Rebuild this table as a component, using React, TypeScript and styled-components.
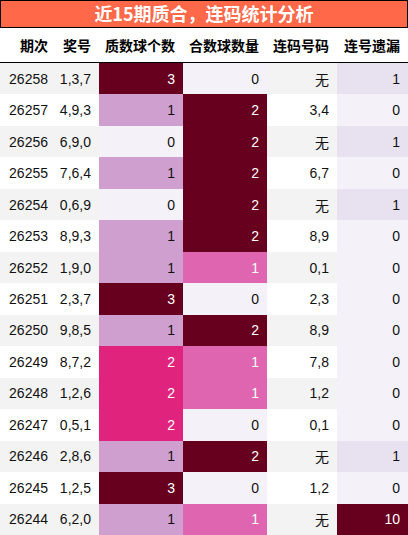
import styled, { createGlobalStyle } from "styled-components";

type Row = {
  issue: string;
  nums: string;
  prime: number;
  composite: number;
  pair: string;
  miss: number;
};

const rows: Row[] = [
  { issue: "26258", nums: "1,3,7", prime: 3, composite: 0, pair: "无", miss: 1 },
  { issue: "26257", nums: "4,9,3", prime: 1, composite: 2, pair: "3,4", miss: 0 },
  { issue: "26256", nums: "6,9,0", prime: 0, composite: 2, pair: "无", miss: 1 },
  { issue: "26255", nums: "7,6,4", prime: 1, composite: 2, pair: "6,7", miss: 0 },
  { issue: "26254", nums: "0,6,9", prime: 0, composite: 2, pair: "无", miss: 1 },
  { issue: "26253", nums: "8,9,3", prime: 1, composite: 2, pair: "8,9", miss: 0 },
  { issue: "26252", nums: "1,9,0", prime: 1, composite: 1, pair: "0,1", miss: 0 },
  { issue: "26251", nums: "2,3,7", prime: 3, composite: 0, pair: "2,3", miss: 0 },
  { issue: "26250", nums: "9,8,5", prime: 1, composite: 2, pair: "8,9", miss: 0 },
  { issue: "26249", nums: "8,7,2", prime: 2, composite: 1, pair: "7,8", miss: 0 },
  { issue: "26248", nums: "1,2,6", prime: 2, composite: 1, pair: "1,2", miss: 0 },
  { issue: "26247", nums: "0,5,1", prime: 2, composite: 0, pair: "0,1", miss: 0 },
  { issue: "26246", nums: "2,8,6", prime: 1, composite: 2, pair: "无", miss: 1 },
  { issue: "26245", nums: "1,2,5", prime: 3, composite: 0, pair: "1,2", miss: 0 },
  { issue: "26244", nums: "6,2,0", prime: 1, composite: 1, pair: "无", miss: 10 },
];

// 색 단계 (PuRd 비슷하게)
const primeColor = (v: number) =>
  v >= 3 ? "#67001f" : v === 2 ? "#e0237c" : v === 1 ? "#cfa0cf" : "#f4f2f8";
const compositeColor = (v: number) =>
  v >= 2 ? "#67001f" : v === 1 ? "#df65b0" : "#f4f2f8";
const missColor = (v: number) =>
  v >= 10 ? "#67001f" : v >= 1 ? "#e8e2f0" : "#f4f2f8";

const isDark = (bg: string) => bg === "#67001f" || bg === "#e0237c" || bg === "#df65b0";

const App = () => {
  return (
    <>
      <GlobalStyle />
      <Wrap>
        <Title>近15期质合，连码统计分析</Title>
        <Table>
          <HeadRow>
            <HeadCell>期次</HeadCell>
            <HeadCell>奖号</HeadCell>
            <HeadCell>质数球个数</HeadCell>
            <HeadCell>合数球数量</HeadCell>
            <HeadCell>连码号码</HeadCell>
            <HeadCell>连号遗漏</HeadCell>
          </HeadRow>
          {rows.map((row, index) => {
            const stripe = index % 2 === 0 ? "#f3f3f3" : "#ffffff";
            const p = primeColor(row.prime);
            const c = compositeColor(row.composite);
            const m = missColor(row.miss);
            return (
              <BodyRow key={row.issue}>
                <Cell $bg={stripe}>{row.issue}</Cell>
                <Cell $bg={stripe}>{row.nums}</Cell>
                <Cell $bg={p} $light={isDark(p)}>{row.prime}</Cell>
                <Cell $bg={c} $light={isDark(c)}>{row.composite}</Cell>
                <Cell $bg={stripe} $cjk={row.pair === "无"}>{row.pair}</Cell>
                <Cell $bg={m} $light={isDark(m)}>{row.miss}</Cell>
              </BodyRow>
            );
          })}
        </Table>
      </Wrap>
    </>
  );
};

export default App;

const GlobalStyle = createGlobalStyle`
  html, body {
    margin: 0;
    padding: 0;
    background: #ffffff;
  }
`;

const Wrap = styled("div")({
  width: 408,
  display: "flex",
  flexDirection: "column",
});

const Title = styled("div")({
  height: 28,
  boxSizing: "border-box",
  border: "1px solid #000",
  backgroundColor: "#ff6849",
  color: "#ffffff",
  fontFamily: '"Noto Sans CJK SC", sans-serif',
  fontWeight: 700,
  fontSize: 18,
  lineHeight: "25px",
  textAlign: "center",
});

const Table = styled("div")({
  display: "flex",
  flexDirection: "column",
});

const columns = "56px 43px 84px 84px 70px 71px";

const HeadRow = styled("div")({
  display: "grid",
  gridTemplateColumns: columns,
  height: 35,
  boxSizing: "border-box",
  borderBottom: "1px solid #000",
  backgroundColor: "#ffffff",
});

const HeadCell = styled("div")({
  display: "flex",
  alignItems: "center",
  justifyContent: "flex-end",
  paddingRight: 8,
  fontFamily: '"Noto Sans CJK SC", sans-serif',
  fontWeight: 700,
  fontSize: 14,
  color: "#000",
});

const BodyRow = styled("div")({
  display: "grid",
  gridTemplateColumns: columns,
  height: 31.47,
});

const Cell = styled("div")<{ $bg: string; $light?: boolean; $cjk?: boolean }>((p) => ({
  display: "flex",
  alignItems: "center",
  justifyContent: "flex-end",
  paddingRight: 8,
  backgroundColor: p.$bg,
  color: p.$light ? "#ffffff" : "#111111",
  fontFamily: p.$cjk
    ? '"Noto Sans CJK SC", sans-serif'
    : '"Liberation Sans", Arial, sans-serif',
  fontSize: 14,
}));
